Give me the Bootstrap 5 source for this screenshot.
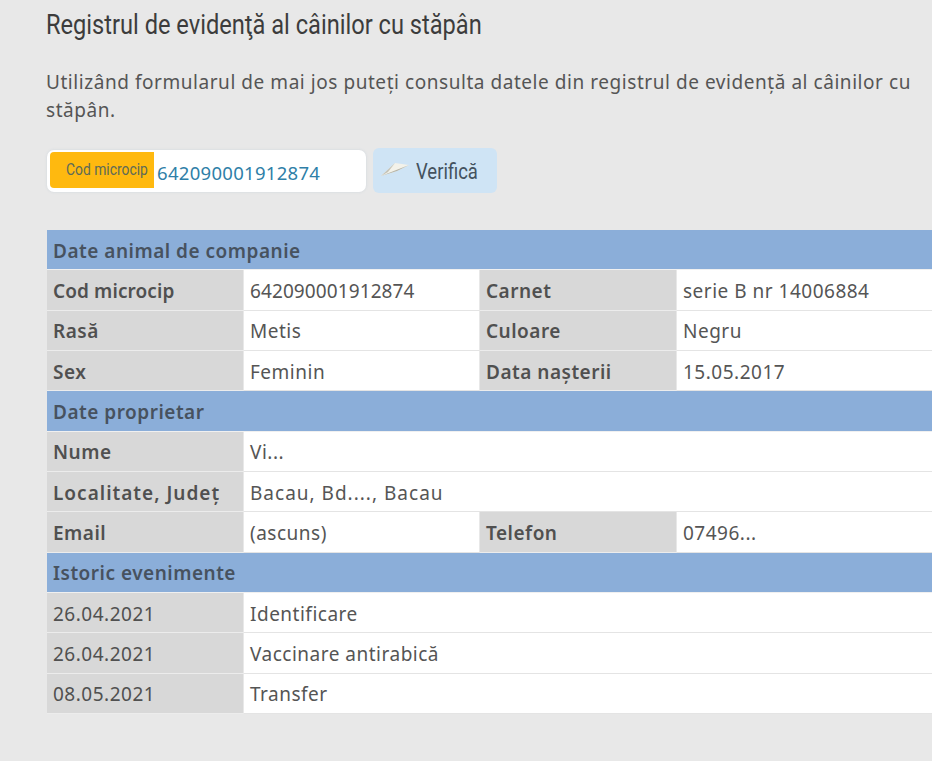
<!DOCTYPE html>
<html lang="ro">
<head>
  <meta charset="UTF-8">
  <meta name="viewport" content="width=device-width, initial-scale=1">
  <title>Registrul de evidență</title>
  <link href="https://cdn.jsdelivr.net/npm/bootstrap@5.3.2/dist/css/bootstrap.min.css" rel="stylesheet">
  <style>
    html, body { height: 761px; overflow: hidden; }
    body { background: #e8e8e8; color: #555; font-family: "Noto Sans", "DejaVu Sans", sans-serif; font-size: 19px; }
    .page-wrap { padding: 0 0 0 46px; width: 932px; overflow: hidden; }
    .cond { font-family: Roboto, sans-serif; display: inline-block; transform: scaleX(.84); transform-origin: left center; white-space: nowrap; }
    .page-title { font-size: 27px; font-weight: 400; color: #3c3c3c; margin: 0; padding-top: 8px; height: 68px; line-height: 32px; }
    .page-title .cond { transform: scaleX(.875); }
    .intro { margin: 0; line-height: 28px; letter-spacing: .55px; padding-right: 10px; height: 82px; }
    .search-row { height: 80px; }
    .chip-box { width: 319px; height: 42px; margin-left: 1px; background: #fff; border-radius: 7px; padding: 2px 3px 4px; box-shadow: 0 0 3px #cfd6dc; }
    .chip-label { width: 104px; height: 36px; background: #ffb90f; color: #5d6b58; border-radius: 4px 0 0 4px; font-size: 16.5px; padding-left: 16px; line-height: 34px; }
    .chip-value { color: #2f7fa8; padding-left: 3px; letter-spacing: .3px; font-size: 18.5px; line-height: 42px; }
    .check-btn { width: 124px; height: 45px; margin-left: 7px; margin-top: -2px; background: #cfe4f5; border: 0; border-radius: 6px; color: #44525e; font-size: 22px; padding: 0 0 0 7px; }
    .check-btn svg { flex: none; margin-top: -4px; }
    .check-btn .cond { width: 62px; margin-left: 6px; margin-top: 1px; }
    .reg-table { table-layout: fixed; width: 1000px; margin-left: 1px; border-collapse: separate; border-spacing: 0; line-height: 24px; letter-spacing: .5px; }
    .reg-table td { height: 40.33px; padding: 2px 6px 0; border-bottom: 1px solid #e4e4e4; border-right: 1px solid #e8e8e8; background: #fff; vertical-align: middle; }
    .reg-table td.sect { background: #8baed9; color: #47525f; font-weight: 600; border-bottom-color: #f0f0f0; }
    .reg-table td.lbl { background: #d8d8d8; font-weight: 600; color: #505050; border-bottom-color: #ececec; }
    .reg-table td.date-lbl { font-weight: 400; }
    .reg-table td.num { letter-spacing: .1px; }
    .reg-table td.tight { letter-spacing: .1px; }
    .reg-table td.wide { letter-spacing: 1px; }
  </style>
</head>
<body>

<div class="page-wrap">
  <h1 class="page-title"><span class="cond">Registrul de evidenţă al câinilor cu stăpân</span></h1>
  <p class="intro">Utilizând formularul de mai jos puteți consulta datele din registrul de evidență al câinilor cu stăpân.</p>

  <div class="search-row d-flex align-items-start">
    <div class="chip-box d-flex">
      <div class="chip-label"><span class="cond">Cod microcip</span></div>
      <div class="chip-value">642090001912874</div>
    </div>
    <button class="check-btn d-flex align-items-center" type="button">
      <svg width="30" height="18" viewBox="0 0 30 18">
        <path d="M1 16 L15 3 L29 5 L17 11 Z" fill="#f3f2ea"/>
        <path d="M1 16 L29 5 L17 11 Z" fill="#b5b3a6"/>
        <path d="M1 16 L15 3 L8 12 Z" fill="#c4c2b6"/>
      </svg>
      <span class="cond">Verifică</span>
    </button>
  </div>

  <table class="reg-table">
    <colgroup><col style="width:197px"><col style="width:236px"><col style="width:197px"><col></colgroup>
    <tr><td class="sect" colspan="4">Date animal de companie</td></tr>
    <tr><td class="lbl tight">Cod microcip</td><td class="num">642090001912874</td><td class="lbl">Carnet</td><td>serie B nr 14006884</td></tr>
    <tr><td class="lbl">Rasă</td><td>Metis</td><td class="lbl">Culoare</td><td>Negru</td></tr>
    <tr><td class="lbl">Sex</td><td>Feminin</td><td class="lbl">Data nașterii</td><td>15.05.2017</td></tr>
    <tr><td class="sect" colspan="4">Date proprietar</td></tr>
    <tr><td class="lbl">Nume</td><td colspan="3">Vi...</td></tr>
    <tr><td class="lbl wide">Localitate, Județ</td><td colspan="3" class="wide">Bacau, Bd...., Bacau</td></tr>
    <tr><td class="lbl">Email</td><td>(ascuns)</td><td class="lbl">Telefon</td><td>07496...</td></tr>
    <tr><td class="sect" colspan="4">Istoric evenimente</td></tr>
    <tr><td class="lbl date-lbl">26.04.2021</td><td colspan="3">Identificare</td></tr>
    <tr><td class="lbl date-lbl">26.04.2021</td><td colspan="3">Vaccinare antirabică</td></tr>
    <tr><td class="lbl date-lbl">08.05.2021</td><td colspan="3">Transfer</td></tr>
  </table>
</div>

<script src="https://cdn.jsdelivr.net/npm/bootstrap@5.3.2/dist/js/bootstrap.bundle.min.js"></script>
</body>
</html>
